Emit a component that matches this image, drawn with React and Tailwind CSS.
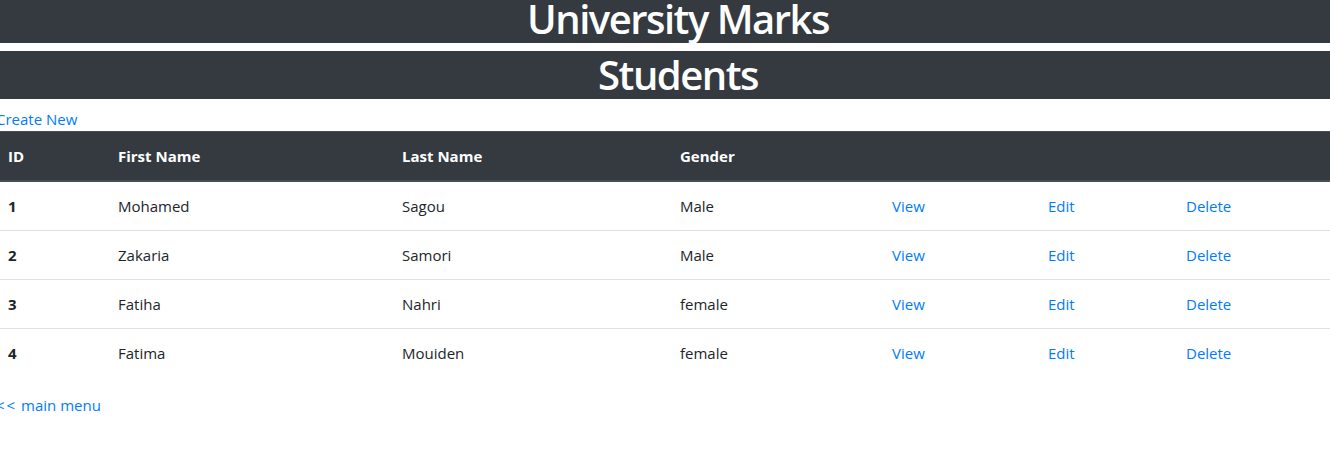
const students = [
  { id: 1, first: "Mohamed", last: "Sagou", gender: "Male" },
  { id: 2, first: "Zakaria", last: "Samori", gender: "Male" },
  { id: 3, first: "Fatiha", last: "Nahri", gender: "female" },
  { id: 4, first: "Fatima", last: "Mouiden", gender: "female" },
];

export default function App() {
  return (
    <div
      className="min-h-screen bg-white text-[15px] text-[#212529] overflow-hidden"
      style={{ fontFamily: '"Open Sans", "Noto Sans", sans-serif' }}
    >
      {/* Titre principal */}
      <div className="h-[43px] bg-[#343a40] flex items-end justify-center pl-[26px] overflow-hidden">
        <h1 className="text-[40px] leading-[48px] font-semibold text-white tracking-[-1.5px]">
          University Marks
        </h1>
      </div>
      <div className="mt-2 h-12 bg-[#343a40] flex items-center justify-center pl-[26px]">
        <h1 className="text-[40px] leading-[48px] font-semibold text-white tracking-[-1.5px]">
          Students
        </h1>
      </div>

      <div className="-ml-1 mt-2">
        <a href="#" className="block leading-6 text-[#007bff]">
          Create New
        </a>

        <table className="w-[calc(100%+4px)] table-fixed border-collapse mb-4">
          <thead>
            <tr className="bg-[#343a40] text-white">
              <th className="w-[110px] text-left font-bold leading-6 p-3 border-t border-b-2 border-[#454d55]">ID</th>
              <th className="w-[284px] text-left font-bold leading-6 p-3 border-t border-b-2 border-[#454d55]">First Name</th>
              <th className="w-[278px] text-left font-bold leading-6 p-3 border-t border-b-2 border-[#454d55]">Last Name</th>
              <th className="w-[212px] text-left font-bold leading-6 p-3 border-t border-b-2 border-[#454d55]">Gender</th>
              <th className="w-[156px] p-3 border-t border-b-2 border-[#454d55]"></th>
              <th className="w-[138px] p-3 border-t border-b-2 border-[#454d55]"></th>
              <th className="p-3 border-t border-b-2 border-[#454d55]"></th>
            </tr>
          </thead>
          <tbody>
            {students.map((s, i) => (
              <tr key={s.id} className={i === 0 ? "" : "border-t border-[#dee2e6]"}>
                <td className="p-3 leading-6 font-bold">{s.id}</td>
                <td className="p-3 leading-6">{s.first}</td>
                <td className="p-3 leading-6">{s.last}</td>
                <td className="p-3 leading-6">{s.gender}</td>
                <td className="p-3 leading-6">
                  <a href="#" className="text-[#007bff]">View</a>
                </td>
                <td className="p-3 leading-6">
                  <a href="#" className="text-[#007bff]">Edit</a>
                </td>
                <td className="p-3 leading-6">
                  <a href="#" className="text-[#007bff]">Delete</a>
                </td>
              </tr>
            ))}
          </tbody>
        </table>

        <a href="#" className="block leading-6 text-[#007bff]">
          <span className="tracking-[2px]">&lt;&lt;</span> main menu
        </a>
      </div>
    </div>
  );
}
